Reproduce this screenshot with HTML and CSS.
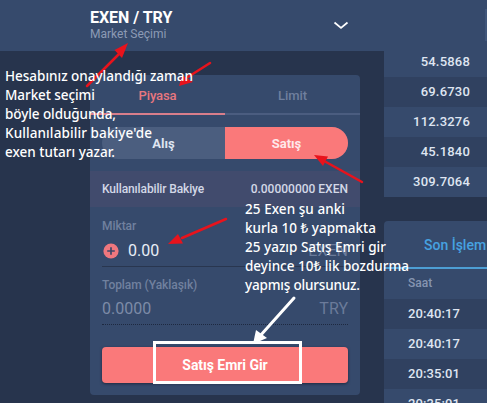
FILE: index.html
```html
<!DOCTYPE html>
<html lang="tr">
<head>
<meta charset="utf-8">
<title>EXEN / TRY</title>
<link rel="stylesheet" href="styles.css">
</head>
<body>
<div class="app">
  <header class="topbar">
    <div class="market">
      <div class="pair">EXEN / TRY</div>
      <div class="market-label">Market Seçimi</div>
    </div>
    <svg class="chevron" width="16" height="10" viewBox="0 0 16 10"><path d="M1.5 1.5 L8 6.8 L14.5 1.5"/></svg>
    <span class="divider"></span>
  </header>
  <main class="content">
    <section class="order">
      <nav class="tabs"><span class="tab active">Piyasa</span><span class="tab">Limit</span></nav>
      <div class="toggle"><span class="side">Alış</span><span class="side selected">Satış</span></div>
      <div class="balance"><span class="caption">Kullanılabilir Bakiye</span><span>0.00000000 EXEN</span></div>
      <div class="field amount">
        <label>Miktar</label>
        <div class="line">
          <svg class="plus" width="16" height="16" viewBox="0 0 16 16"><circle cx="8" cy="8" r="7.6"/><path d="M8 4.2V11.8M4.2 8H11.8"/></svg>
          <span class="value">0.00</span><span class="unit">EXEN</span>
        </div>
      </div>
      <div class="field total">
        <label>Toplam (Yaklaşık)</label>
        <div class="line"><span class="value">0.0000</span><span class="unit">TRY</span></div>
      </div>
      <button class="submit">Satış Emri Gir</button>
    </section>
    <aside class="side-column">
      <div class="book">
        <div class="row first">54.5868</div>
        <div class="row dark">69.6730</div>
        <div class="row">112.3276</div>
        <div class="row dark">45.1840</div>
        <div class="row">309.7064</div>
      </div>
      <div class="trades">
        <div class="trades-tab">Son İşlem</div>
        <div class="trades-head">Saat</div>
        <div class="time dark">20:40:17</div>
        <div class="time">20:40:17</div>
        <div class="time dark">20:35:01</div>
        <div class="time">20:35:01</div>
      </div>
    </aside>
  </main>
  <svg class="notes" width="487" height="403" viewBox="0 0 487 403">
    <g class="red">
      <path class="shaft" d="M87 86L119 54"/><path d="M128 43L114.500 50L122 58Z"/>
      <path class="shaft" d="M210 63L188 77"/><path d="M179 86L182 75L193 82Z"/>
      <path class="shaft" d="M362 182L326 162"/><path d="M314 155L328 156.500L323 166Z"/>
      <path class="shaft" d="M226 219L182 238"/><path d="M168 244L178 234L183 243.500Z"/>
    </g>
    <g class="white">
      <path class="shaft" d="M294 298L260 336"/><path class="head" d="M253 344L256 330L267 338Z"/>
      <rect x="154.500" y="342.500" width="146" height="40"/>
    </g>
    <g class="text">
      <text x="5" y="81" textLength="188">Hesabınız onaylandığı zaman</text>
      <text x="5" y="100" textLength="90">Market seçimi</text>
      <text x="5" y="119" textLength="111">böyle olduğunda,</text>
      <text x="5" y="138" textLength="147">Kullanılabilir bakiye'de</text>
      <text x="5" y="157" textLength="110">exen tutarı yazar.</text>
      <text x="245" y="214" textLength="100">25 Exen şu anki</text>
      <text x="245" y="233" textLength="131">kurla 10 ₺ yapmakta</text>
      <text x="245" y="252" textLength="141">25 yazıp Satış Emri gir</text>
      <text x="245" y="271" textLength="164">deyince 10₺ lik bozdurma</text>
      <text x="245" y="290" textLength="115">yapmış olursunuz.</text>
    </g>
  </svg>
</div>
</body>
</html>
```
FILE: styles.css
```css
* { box-sizing: border-box; }
body { margin: 0; background: #27344d; font-family: Roboto, "Liberation Sans", sans-serif; color: #dfe5f1; }
.app { position: relative; width: 487px; height: 403px; overflow: hidden; }
.topbar { height: 51px; background: #364a6c; display: flex; align-items: flex-start; padding-left: 90px; }
.market { width: 244px; padding-top: 9px; }
.pair { font-size: 16px; line-height: 18px; font-weight: 700; color: #fff; letter-spacing: -0.03px; }
.market-label { font-size: 12px; line-height: 15px; color: #8c9ab5; }
.chevron { margin-top: 21px; margin-left: -1px; fill: none; stroke: #fff; stroke-width: 1.7; }
.divider { width: 2px; height: 32px; margin: 9px 0 0 auto; background: #40567a; }
.content { display: flex; gap: 24px; padding-left: 90px; }
.order { width: 270px; height: 320px; margin-top: 24px; flex: none; background: #364a6c; border-radius: 4px; }
.tabs { display: flex; height: 40px; }
.tab { flex: 1; border-bottom: 2px solid #4b5d80; text-align: center; font-size: 13px; font-weight: 500; line-height: 41px; color: #6f7f9e; letter-spacing: -0.1px; }
.tab.active { color: #e8777f; border-color: #d97e8b; }
.toggle { display: flex; margin: 12px 12px 0; height: 32px; border-radius: 16px; overflow: hidden; background: #4b5e7f; }
.side { flex: 1; text-align: center; line-height: 33px; font-size: 13px; font-weight: 700; color: #dfe5f1; }
.selected { background: #fa797a; color: #ffe8ea; }
.balance { display: flex; justify-content: space-between; margin-top: 12px; height: 36px; padding: 0 12px; background: #414b6d; font-size: 12px; font-weight: 500; line-height: 36px; color: #d3d8e7; }
.caption { letter-spacing: -0.13px; }
.field { margin: 0 12px; height: 60px; }
.field label { display: block; font-size: 12px; font-weight: 500; line-height: 16px; color: #71819f; letter-spacing: -0.06px; }
.line { display: flex; align-items: center; }
.amount { padding-top: 11px; border-bottom: 1px solid #29364f; }
.amount .line { height: 33px; }
.total { height: 58px; padding-top: 10px; border-bottom: 1px dotted #1e2940; }
.total .line { height: 31px; }
.plus { margin-right: 9px; margin-left: 1px; }
.plus circle { fill: #ef777e; }
.plus path { stroke: #3d4768; stroke-width: 1.7; }
.value { font-size: 16px; color: #e8edf6; }
.unit { margin-left: auto; font-size: 16px; color: #6b7b9a; }
.total .value { color: #7d8ba7; }
.submit { display: block; margin: 22px 12px 0; width: 246px; height: 36px; padding: 0; border: 0; border-radius: 4px; background: #fa797a; color: #fff; font: 700 14px/36px Roboto, sans-serif; letter-spacing: -0.05px; box-shadow: 0 1px 3px #1f2a40; }
.side-column { flex: 1; min-width: 0; }
.book { background: #364a6c; }
.row { height: 30px; padding-right: 17px; text-align: right; font-size: 13px; font-weight: 500; line-height: 30px; letter-spacing: 0.2px; }
.row.first { height: 26px; line-height: 22px; }
.dark { background: #304160; }
.trades { margin-top: 24px; background: #364a6c; border-radius: 4px 0 0; overflow: hidden; }
.trades-tab { height: 48px; padding-left: 40px; border-bottom: 2px solid #4d9ed4; color: #46a2e0; font-size: 14px; font-weight: 500; line-height: 48px; white-space: nowrap; }
.trades-head { height: 30px; padding-left: 24px; font-size: 12px; font-weight: 500; line-height: 29px; color: #8695b1; }
.time { height: 30px; padding-left: 24px; font-size: 13px; font-weight: 500; line-height: 30px; letter-spacing: 0.1px; }
.notes { position: absolute; left: 0; top: 0; }
.red { fill: #e8131c; }
.red .shaft { stroke: #e8131c; stroke-width: 2.5; stroke-linecap: round; }
.white { fill: none; stroke: #fff; stroke-width: 3; stroke-linecap: round; }
.white .head { fill: #fff; stroke: none; }
.text { fill: #fff; font-family: "Noto Sans", "Open Sans", sans-serif; font-size: 13.5px; font-weight: 500; }
```
